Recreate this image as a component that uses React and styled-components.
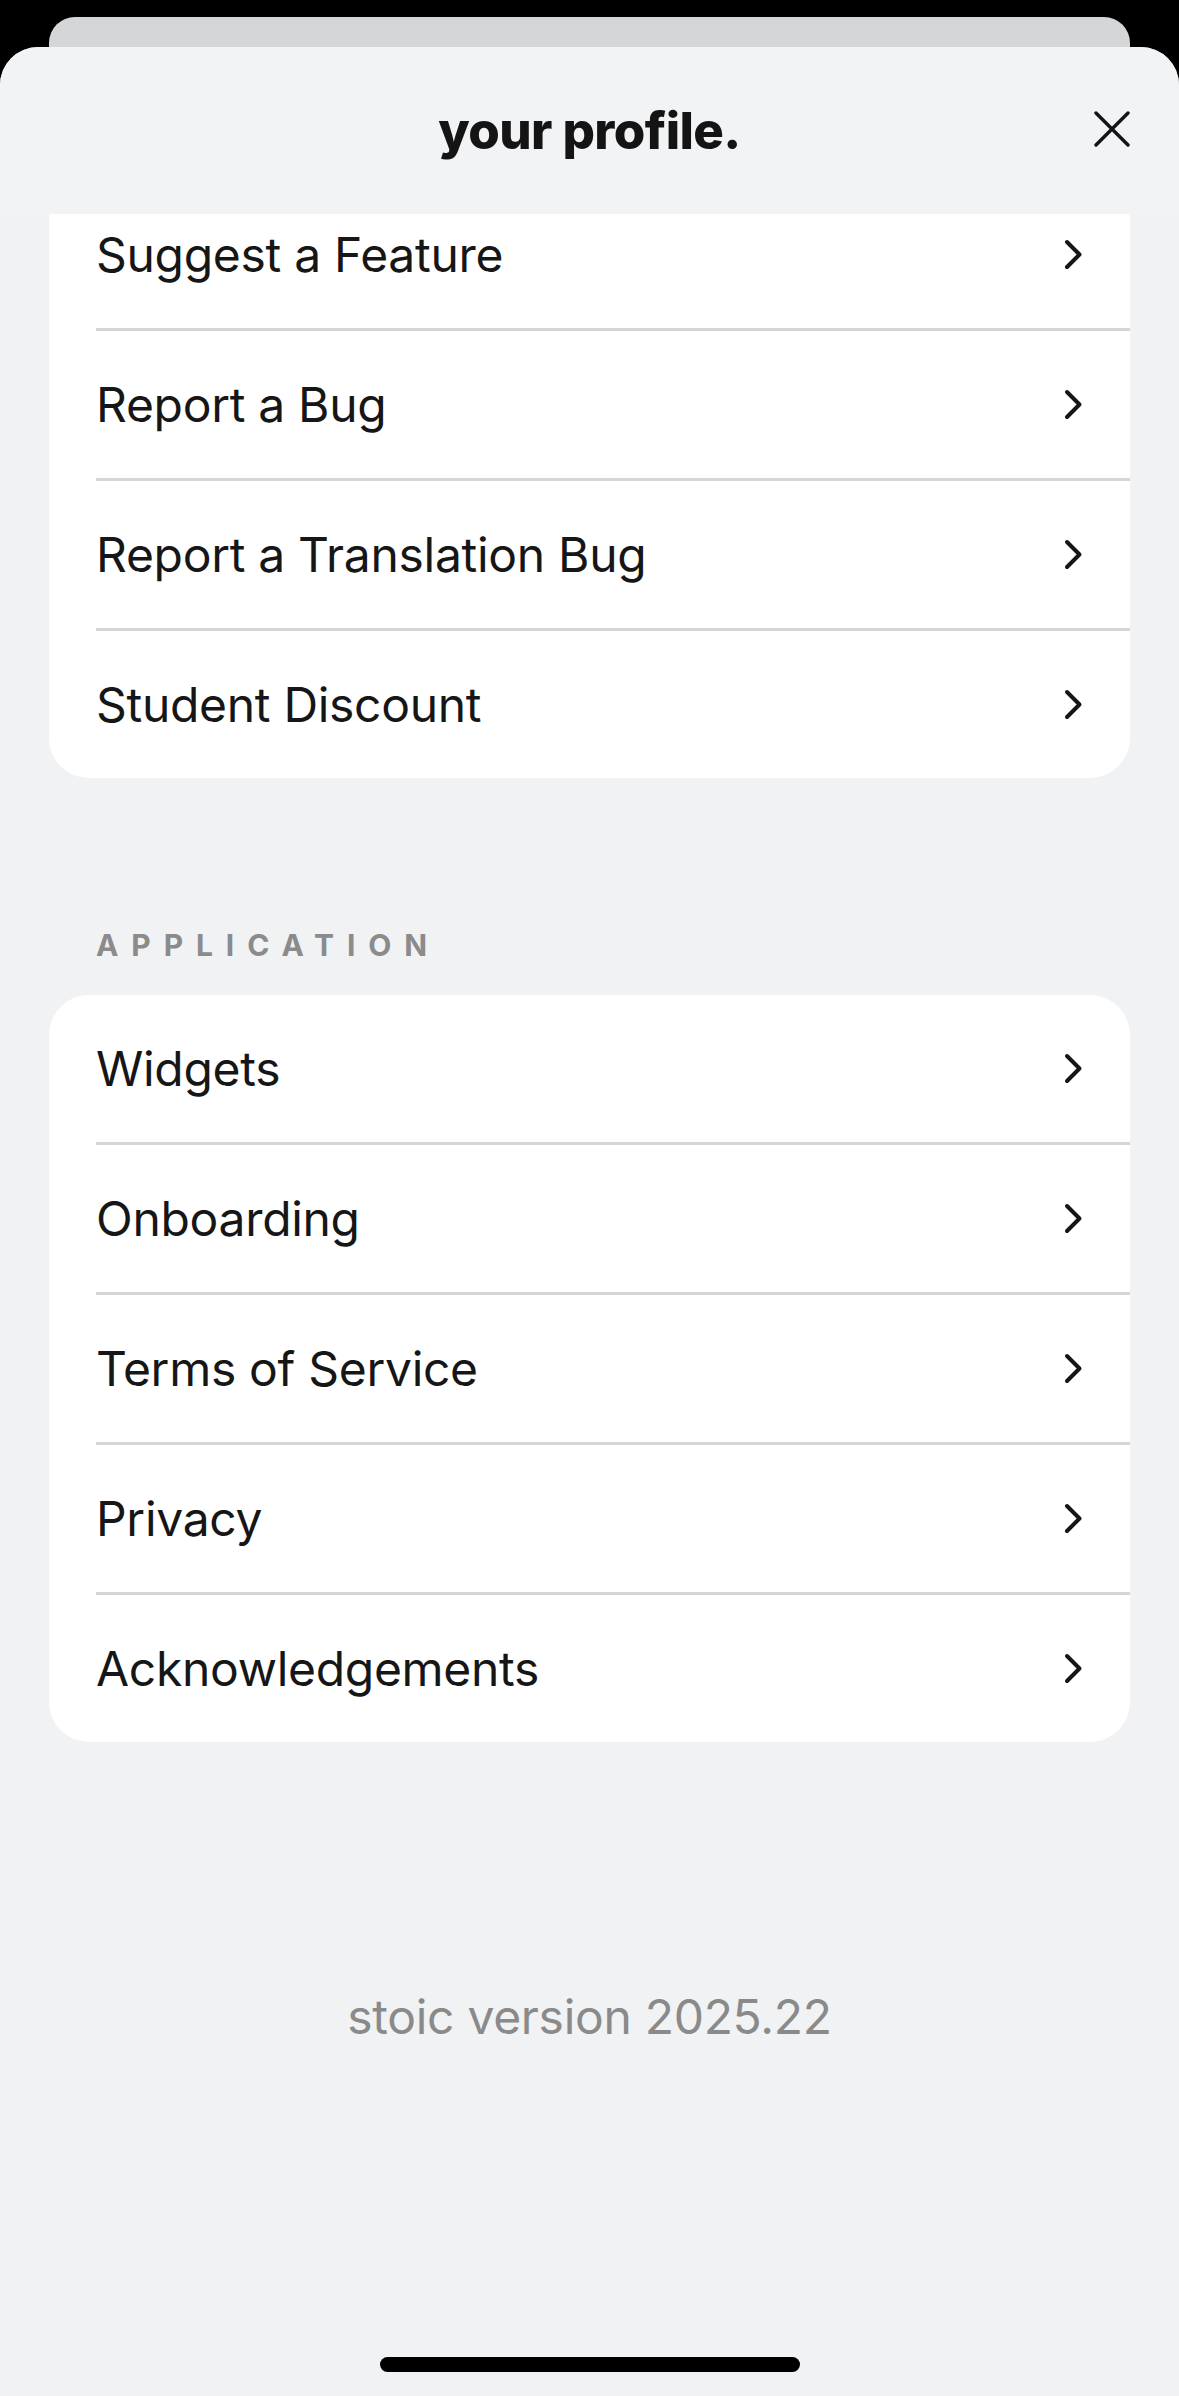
import React from "react";
import styled, { createGlobalStyle } from "styled-components";

const GlobalStyle = createGlobalStyle`
  html, body {
    margin: 0;
    padding: 0;
    background: #000;
  }
  body {
    font-family: Inter, "Noto Sans", "Liberation Sans", sans-serif;
    -webkit-font-smoothing: antialiased;
  }
`;

const Screen = styled.div`
  width: 1179px;
  height: 2396px;
  display: flex;
  flex-direction: column;
  background: #000;
  overflow: hidden;
`;

const BackCard = styled.div`
  height: 30px;
  margin: 17px 49px 0;
  flex-shrink: 0;
  background: #d4d6d8;
  border-radius: 26px 26px 0 0;
`;

const Sheet = styled.div`
  flex: 1;
  display: flex;
  flex-direction: column;
  min-height: 0;
  background: #f1f2f4;
  border-radius: 38px 38px 0 0;
  overflow: hidden;
`;

const Header = styled.header`
  height: 167px;
  flex-shrink: 0;
  display: grid;
  grid-template-columns: 1fr auto 1fr;
  align-items: center;
  padding: 0 49px;
  background: rgba(241, 242, 244, 0.96);
`;

const Title = styled.h1`
  grid-column: 2;
  margin: 0;
  font-size: 51px;
  font-weight: 800;
  letter-spacing: -0.6px;
  color: #141414;
`;

const CloseButton = styled.button`
  grid-column: 3;
  justify-self: end;
  width: 36px;
  height: 36px;
  padding: 0;
  border: none;
  background: none;
  display: flex;
  margin-top: -4px;
`;

const Body = styled.div`
  flex: 1;
  min-height: 0;
  overflow: hidden;
  padding: 0 49px;
`;

const Content = styled.div`
  margin-top: -33px;
  display: flex;
  flex-direction: column;
`;

const Card = styled.div`
  background: #fff;
  border-radius: 40px;
  overflow: hidden;
`;

const Row = styled.div`
  height: 147px;
  display: flex;
  align-items: center;
  justify-content: space-between;
  padding: 0 47px;
`;

const RowLabel = styled.span`
  font-size: 48px;
  font-weight: 400;
  color: #161616;
  letter-spacing: -0.3px;
`;

const Divider = styled.div`
  height: 3px;
  margin-left: 47px;
  background: #d6d6d8;
`;

const SectionLabel = styled.div`
  margin: 149px 0 32px 47px;
  line-height: 36px;
  font-size: 30px;
  font-weight: 700;
  letter-spacing: 0.43em;
  color: #8b8b8b;
`;

const Version = styled.div`
  margin-top: 248px;
  text-align: center;
  line-height: 54px;
  font-size: 48px;
  letter-spacing: -0.3px;
  color: #8a8a8a;
`;

const HomeIndicator = styled.div`
  width: 420px;
  height: 15px;
  margin: 0 auto 24px;
  flex-shrink: 0;
  border-radius: 8px;
  background: #000;
`;

const Chevron = () => (
  <svg width="19" height="31" viewBox="0 0 19 31" fill="none">
    <polyline
      points="3,3 15.5,15.5 3,28"
      stroke="#161616"
      strokeWidth="4"
      strokeLinecap="round"
      strokeLinejoin="round"
    />
  </svg>
);

const CloseIcon = () => (
  <svg width="36" height="36" viewBox="0 0 36 36" fill="none">
    <path d="M2 2L34 34M34 2L2 34" stroke="#141414" strokeWidth="3.4" strokeLinecap="round" />
  </svg>
);

const support = ["Suggest a Feature", "Report a Bug", "Report a Translation Bug", "Student Discount"];
const application = ["Widgets", "Onboarding", "Terms of Service", "Privacy", "Acknowledgements"];

const Menu = ({ items }) => (
  <Card>
    {items.map((item, i) => (
      <React.Fragment key={item}>
        {i > 0 && <Divider />}
        <Row>
          <RowLabel>{item}</RowLabel>
          <Chevron />
        </Row>
      </React.Fragment>
    ))}
  </Card>
);

const App = () => {
  return (
    <>
      <GlobalStyle />
      <Screen>
        <BackCard />
        <Sheet>
          <Header>
            <Title>your profile.</Title>
            <CloseButton aria-label="Close">
              <CloseIcon />
            </CloseButton>
          </Header>
          <Body>
            <Content>
              <Menu items={support} />
              <SectionLabel>APPLICATION</SectionLabel>
              <Menu items={application} />
              <Version>stoic version 2025.22</Version>
            </Content>
          </Body>
          <HomeIndicator />
        </Sheet>
      </Screen>
    </>
  );
};

export default App;
